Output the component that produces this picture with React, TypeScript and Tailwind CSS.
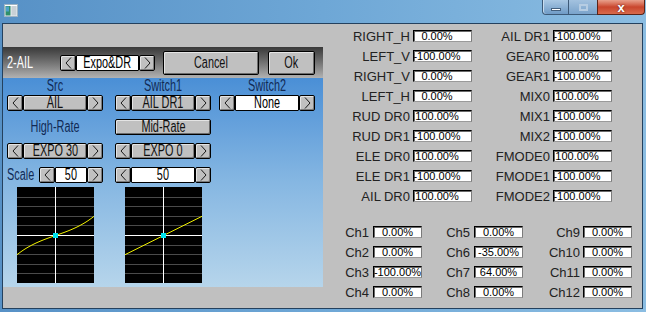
import React from "react";

function C({ children, className = "" }: { children: React.ReactNode; className?: string }) {
  return (
    <span className={"inline-block whitespace-nowrap text-[16px] leading-none scale-x-[0.68] " + className}>
      {children}
    </span>
  );
}

function Arrow({ dir }: { dir: "l" | "r" }) {
  return (
    <div className="w-[16px] h-full shrink-0 rounded-[2px] border border-black bg-[#c0c0c0] shadow-[inset_1px_1px_0_#e4e4e4,inset_-1px_-1px_0_#7c7c7c] flex items-center justify-center">
      <svg width="7" height="12" viewBox="0 0 7 12">
        <polyline
          points={dir === "l" ? "6,0.5 1,6 6,11.5" : "1,0.5 6,6 1,11.5"}
          fill="none"
          stroke="#1a1a1a"
          strokeWidth="1"
        />
      </svg>
    </div>
  );
}

function Field({ text, white }: { text: string; white?: boolean }) {
  return (
    <div
      className={
        white
          ? "flex-1 h-full min-w-0 border border-black rounded-[1px] bg-white flex items-center justify-center text-black"
          : "flex-1 h-full min-w-0 border border-black rounded-[2px] bg-[#c0c0c0] shadow-[inset_1px_1px_0_#e4e4e4,inset_-1px_-1px_0_#7c7c7c] flex items-center justify-center text-[#111]"
      }
    >
      <C>{text}</C>
    </div>
  );
}

function Spinner({ text, white }: { text: string; white?: boolean }) {
  return (
    <div className="flex h-[16px] w-[96px]">
      <Arrow dir="l" />
      <Field text={text} white={white} />
      <Arrow dir="r" />
    </div>
  );
}

function Label({ text }: { text: string }) {
  return (
    <div className="w-[96px] h-full flex items-center justify-center text-[#112a55]">
      <C>{text}</C>
    </div>
  );
}

const expoPath = (k: number) => {
  const pts: string[] = [];
  for (let i = 0; i <= 77; i++) {
    const x = (i - 38.5) / 38.5;
    const y = 0.5 * (k * x * x * x + (1 - k) * x);
    const py = 48.5 - (y * 48) / 1.25;
    pts.push(`${i === 0 ? "M" : "L"}${i.toFixed(1)},${py.toFixed(2)}`);
  }
  return pts.join(" ");
};

function Graph({ k }: { k: number }) {
  const lines = [1, 2, 3, 4, 6, 7, 8, 9].map((n) => Math.round(n * 9.6) + 0.5);
  return (
    <svg width="77" height="96" viewBox="0 0 77 96" className="ml-[10px] block">
      <rect width="77" height="96" fill="#000" />
      {lines.map((y) => (
        <line key={y} x1="0" x2="77" y1={y} y2={y} stroke="#4a4a4a" strokeWidth="1" />
      ))}
      <line x1="0" x2="77" y1="48.5" y2="48.5" stroke="#fff" strokeWidth="1" />
      <line x1="38.5" x2="38.5" y1="0" y2="96" stroke="#fff" strokeWidth="1" />
      <path d={expoPath(k)} fill="none" stroke="#f2f200" strokeWidth="1" />
      <rect x="36" y="46" width="5" height="5" fill="#00e5f0" />
    </svg>
  );
}

function Box({ v, pad }: { v: string; pad?: boolean }) {
  return (
    <div
      className={
        "h-[12px] bg-white border border-t-black border-l-black border-r-[#7a7a7a] border-b-[#9a9a9a] shadow-[inset_1px_1px_0_#6a6a6a] flex items-center justify-center text-[11px] leading-none text-black overflow-hidden whitespace-nowrap " +
        (pad ? "w-[59px] pr-[11px]" : "w-[49px]")
      }
    >
      {v}
    </div>
  );
}

const rows: [string, string, string, string][] = [
  ["RIGHT_H", "0.00%", "AIL DR1", "-100.00%"],
  ["LEFT_V", "-100.00%", "GEAR0", "100.00%"],
  ["RIGHT_V", "0.00%", "GEAR1", "-100.00%"],
  ["LEFT_H", "0.00%", "MIX0", "100.00%"],
  ["RUD DR0", "100.00%", "MIX1", "-100.00%"],
  ["RUD DR1", "-100.00%", "MIX2", "-100.00%"],
  ["ELE DR0", "100.00%", "FMODE0", "100.00%"],
  ["ELE DR1", "-100.00%", "FMODE1", "-100.00%"],
  ["AIL DR0", "100.00%", "FMODE2", "-100.00%"],
];

const ch: [string, string, string, string, string, string][] = [
  ["Ch1", "0.00%", "Ch5", "0.00%", "Ch9", "0.00%"],
  ["Ch2", "0.00%", "Ch6", "-35.00%", "Ch10", "0.00%"],
  ["Ch3", "-100.00%", "Ch7", "64.00%", "Ch11", "0.00%"],
  ["Ch4", "0.00%", "Ch8", "0.00%", "Ch12", "0.00%"],
];

export default function App() {
  return (
    <div className="w-[646px] h-[312px] overflow-hidden flex flex-col bg-gradient-to-r from-[#5791c6] via-[#6ea7d6] to-[#8bbde2] font-['Liberation_Sans',Arial,sans-serif]">
      {/* title bar */}
      <div className="h-[23px] shrink-0 flex items-start">
        <svg width="14" height="13" viewBox="0 0 14 13" className="ml-[4px] mt-[4px]">
          <rect x="0.5" y="0.5" width="13" height="12" fill="#e8eef2" stroke="#9fb4c4" />
          <rect x="1.5" y="2" width="5" height="9.5" fill="#2f8f6a" />
          <rect x="2" y="2.5" width="3" height="5" fill="#4aa0c8" />
          <rect x="7.5" y="2" width="5" height="9.5" fill="#c8d0d6" />
          <rect x="1" y="1" width="12" height="1" fill="#ffffff" />
        </svg>
        <div className="ml-auto mr-[1px] flex h-[15px]">
          <div className="w-[27px] h-full border border-[#3d5a78] border-t-0 rounded-bl-[4px] bg-gradient-to-b from-[#a9c8e4] to-[#6f9bc6] shadow-[inset_1px_0_0_#c9ddef] flex items-end justify-center pb-[3px]">
            <div className="w-[10px] h-[3px] bg-white border border-[#44607e]" />
          </div>
          <div className="w-[28px] h-full border-b border-[#3d5a78] bg-gradient-to-b from-[#a3c2df] to-[#7aa3cb] flex items-center justify-center">
            <div className="w-[9px] h-[7px] border-2 border-[#b6cde3]" />
          </div>
          <div className="w-[48px] h-full border border-t-0 border-[#5a2418] rounded-br-[4px] bg-gradient-to-b from-[#e8a08c] via-[#c9452d] to-[#d86a4c] flex items-center justify-center">
            <span className="text-white text-[13px] font-bold leading-none [text-shadow:0_0_2px_#5a1a10]">x</span>
          </div>
        </div>
      </div>

      {/* client */}
      <div className="ml-[2px] w-[641px] h-[286px] shrink-0 border border-[#24415e] bg-[#c0c0c0] flex">
        {/* left: emulated screen */}
        <div className="w-[320px] shrink-0 flex flex-col">
          <div className="h-[23px] shrink-0" />
          <div className="h-[31px] shrink-0 bg-gradient-to-b from-[#393939] to-[#b2b2b2] flex items-center">
            <div className="w-[57px] pl-[4px] text-white">
              <C className="origin-left">2-AIL</C>
            </div>
            <div className="flex h-[16px] w-[95px]">
              <Arrow dir="l" />
              <Field text="Expo&DR" white />
              <Arrow dir="r" />
            </div>
            <div className="ml-[8px] w-[96px] h-[24px] border border-black rounded-[2px] bg-[#c0c0c0] shadow-[inset_1px_1px_0_#e4e4e4,inset_-1px_-1px_0_#6c6c6c] flex items-center justify-center text-[#111]">
              <C>Cancel</C>
            </div>
            <div className="ml-[9px] w-[47px] h-[24px] border border-black rounded-[2px] bg-[#c0c0c0] shadow-[inset_1px_1px_0_#e4e4e4,inset_-1px_-1px_0_#6c6c6c] flex items-center justify-center text-[#111]">
              <C>Ok</C>
            </div>
          </div>
          <div className="h-[209px] shrink-0 bg-gradient-to-b from-[#4a8fd6] via-[#86b7e2] to-[#b6d5eb] pl-[4px] flex flex-col">
            <div className="h-[16px] flex">
              <Label text="Src" />
              <div className="ml-[12px]">
                <Label text="Switch1" />
              </div>
              <div className="ml-[8px]">
                <Label text="Switch2" />
              </div>
            </div>
            <div className="mt-[1px] flex">
              <Spinner text="AIL" />
              <div className="ml-[12px]">
                <Spinner text="AIL DR1" />
              </div>
              <div className="ml-[8px]">
                <Spinner text="None" white />
              </div>
            </div>
            <div className="mt-[8px] h-[16px] flex">
              <Label text="High-Rate" />
              <div className="ml-[12px] w-[96px] h-[16px] border border-black rounded-[2px] bg-[#c0c0c0] shadow-[inset_1px_1px_0_#e4e4e4,inset_-1px_-1px_0_#6c6c6c] flex items-center justify-center text-[#111]">
                <C>Mid-Rate</C>
              </div>
            </div>
            <div className="mt-[8px] flex">
              <Spinner text="EXPO 30" />
              <div className="ml-[12px]">
                <Spinner text="EXPO 0" />
              </div>
            </div>
            <div className="mt-[8px] flex">
              <div className="flex h-[16px] w-[96px]">
                <div className="w-[32px] h-full flex items-center text-[#112a55]">
                  <C className="origin-left">Scale</C>
                </div>
                <Arrow dir="l" />
                <Field text="50" white />
                <Arrow dir="r" />
              </div>
              <div className="ml-[12px]">
                <Spinner text="50" white />
              </div>
            </div>
            <div className="mt-[4px] flex">
              <div className="w-[96px]">
                <Graph k={0.3} />
              </div>
              <div className="ml-[12px] w-[96px]">
                <Graph k={0} />
              </div>
            </div>
          </div>
        </div>

        {/* right */}
        <div className="flex-1 flex flex-col pt-[2px] text-[13px] text-[#222] leading-none">
          {rows.map((r) => (
            <div key={r[0]} className="h-[20px] flex items-center">
              <div className="w-[87px] text-right whitespace-nowrap">{r[0]}</div>
              <div className="ml-[3px]">
                <Box v={r[1]} pad />
              </div>
              <div className="w-[78px] text-right whitespace-nowrap">{r[2]}</div>
              <div className="ml-[3px]">
                <Box v={r[3]} pad />
              </div>
            </div>
          ))}
          <div className="mt-[16px] flex flex-col">
            {ch.map((r) => (
              <div key={r[0]} className="h-[20px] flex items-center">
                <div className="w-[46px] text-right">{r[0]}</div>
                <div className="ml-[4px]">
                  <Box v={r[1]} />
                </div>
                <div className="w-[48px] text-right">{r[2]}</div>
                <div className="ml-[4px]">
                  <Box v={r[3]} />
                </div>
                <div className="w-[57px] text-right">{r[4]}</div>
                <div className="ml-[3px]">
                  <Box v={r[5]} />
                </div>
              </div>
            ))}
          </div>
        </div>
      </div>
    </div>
  );
}
